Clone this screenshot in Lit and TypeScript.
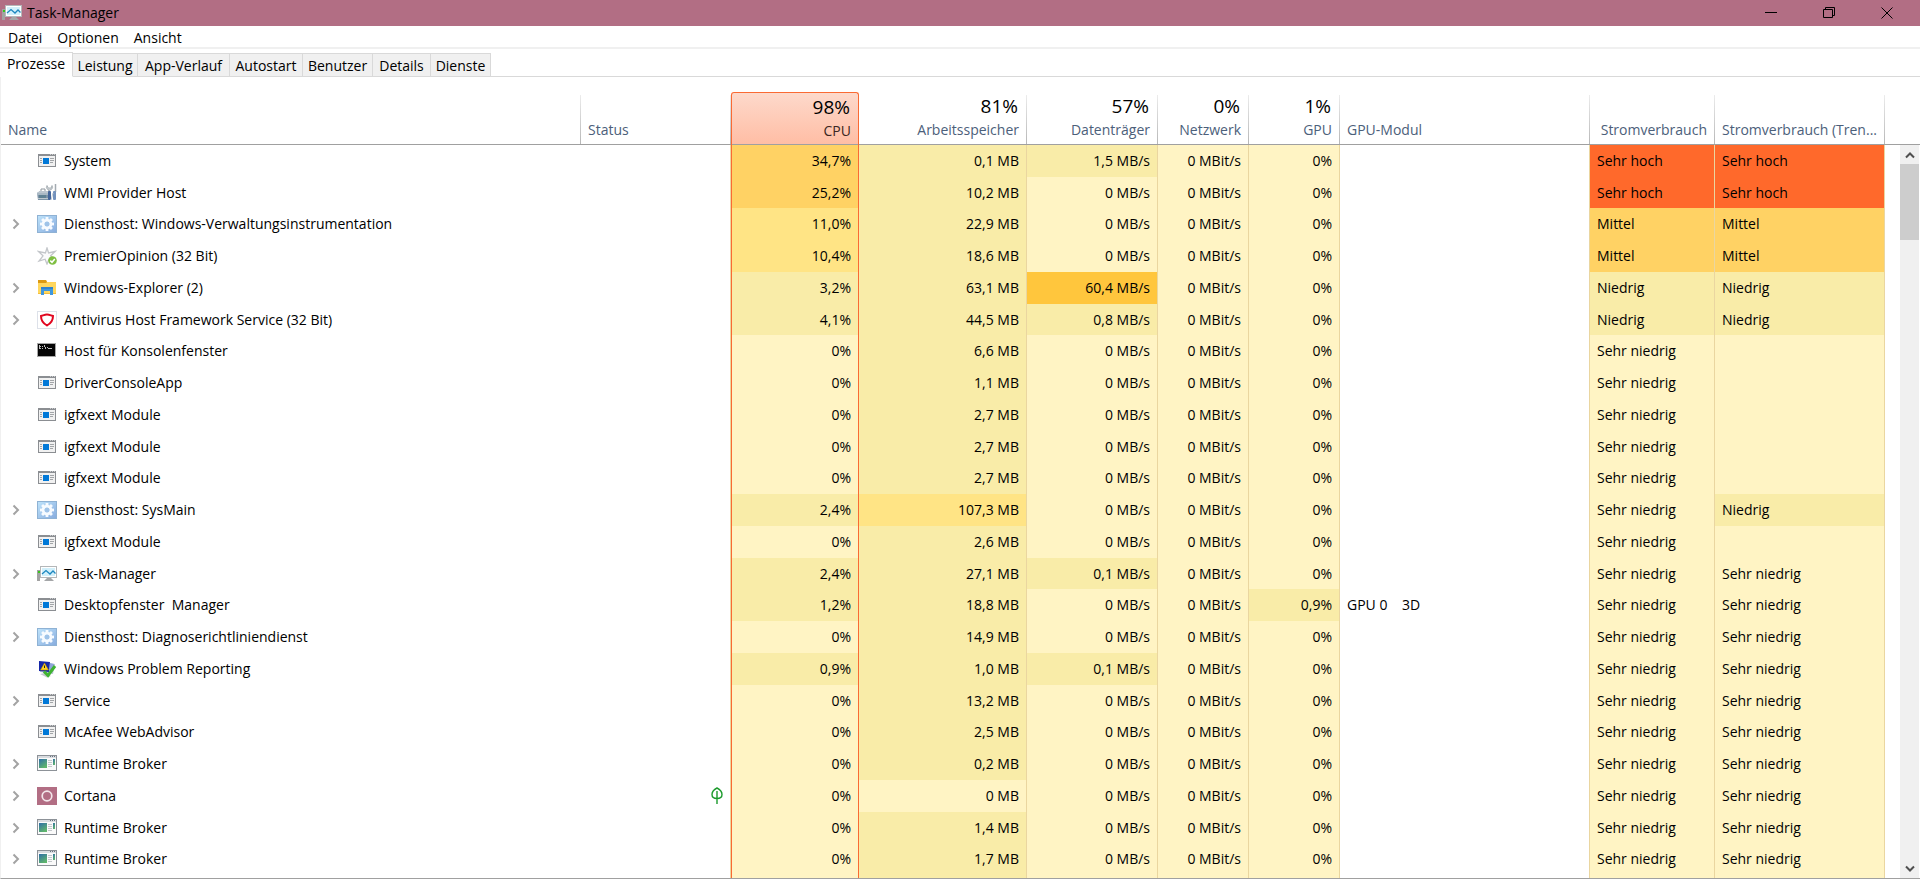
import { LitElement, html, css, svg, nothing } from "lit";
import { customElement, property, state } from "lit/decorators.js";
import { classMap } from "lit/directives/class-map.js";

type Heat = 0 | 1 | 2 | 3 | 4 | 5;
type IconName =
  | "app" | "wmi" | "gear" | "star" | "folder" | "shield" | "console"
  | "monitor" | "problem" | "runtime" | "cortana";

interface Process {
  icon: IconName;
  name: string;
  group?: boolean;
  suspended?: boolean;
  cpu: [string, Heat];
  mem: [string, Heat];
  disk: [string, Heat];
  gpu: [string, Heat];
  engine?: string;
  power: string;
  trend: string;
}

const make = (
  icon: IconName,
  name: string,
  group: boolean,
  cpu: [string, Heat],
  mem: [string, Heat],
  disk: [string, Heat],
  power: string,
  trend: string,
  extra: Partial<Process> = {},
): Process => ({ icon, name, group, cpu, mem, disk, gpu: ["0%", 0], power, trend, ...extra });

const VERY_LOW = "Sehr niedrig";
const IDLE: [string, Heat] = ["0%", 0];
const NO_IO: [string, Heat] = ["0 MB/s", 0];

const PROCESSES: Process[] = [
  make("app", "System", false, ["34,7%", 3], ["0,1 MB", 1], ["1,5 MB/s", 1], "Sehr hoch", "Sehr hoch"),
  make("wmi", "WMI Provider Host", false, ["25,2%", 3], ["10,2 MB", 1], NO_IO, "Sehr hoch", "Sehr hoch"),
  make("gear", "Diensthost: Windows-Verwaltungsinstrumentation", true, ["11,0%", 2], ["22,9 MB", 1], NO_IO, "Mittel", "Mittel"),
  make("star", "PremierOpinion (32 Bit)", false, ["10,4%", 2], ["18,6 MB", 1], NO_IO, "Mittel", "Mittel"),
  make("folder", "Windows-Explorer (2)", true, ["3,2%", 1], ["63,1 MB", 1], ["60,4 MB/s", 4], "Niedrig", "Niedrig"),
  make("shield", "Antivirus Host Framework Service (32 Bit)", true, ["4,1%", 1], ["44,5 MB", 1], ["0,8 MB/s", 1], "Niedrig", "Niedrig"),
  make("console", "Host für Konsolenfenster", false, IDLE, ["6,6 MB", 1], NO_IO, VERY_LOW, ""),
  make("app", "DriverConsoleApp", false, IDLE, ["1,1 MB", 1], NO_IO, VERY_LOW, ""),
  make("app", "igfxext Module", false, IDLE, ["2,7 MB", 1], NO_IO, VERY_LOW, ""),
  make("app", "igfxext Module", false, IDLE, ["2,7 MB", 1], NO_IO, VERY_LOW, ""),
  make("app", "igfxext Module", false, IDLE, ["2,7 MB", 1], NO_IO, VERY_LOW, ""),
  make("gear", "Diensthost: SysMain", true, ["2,4%", 1], ["107,3 MB", 2], NO_IO, VERY_LOW, "Niedrig"),
  make("app", "igfxext Module", false, IDLE, ["2,6 MB", 1], NO_IO, VERY_LOW, ""),
  make("monitor", "Task-Manager", true, ["2,4%", 1], ["27,1 MB", 1], ["0,1 MB/s", 1], VERY_LOW, VERY_LOW),
  make("app", "Desktopfenster  Manager", false, ["1,2%", 1], ["18,8 MB", 1], NO_IO, VERY_LOW, VERY_LOW, { gpu: ["0,9%", 1], engine: "GPU 0    3D" }),
  make("gear", "Diensthost: Diagnoserichtliniendienst", true, IDLE, ["14,9 MB", 1], NO_IO, VERY_LOW, VERY_LOW),
  make("problem", "Windows Problem Reporting", false, ["0,9%", 1], ["1,0 MB", 1], ["0,1 MB/s", 1], VERY_LOW, VERY_LOW),
  make("app", "Service", true, IDLE, ["13,2 MB", 1], NO_IO, VERY_LOW, VERY_LOW),
  make("app", "McAfee WebAdvisor", false, IDLE, ["2,5 MB", 1], NO_IO, VERY_LOW, VERY_LOW),
  make("runtime", "Runtime Broker", true, IDLE, ["0,2 MB", 1], NO_IO, VERY_LOW, VERY_LOW),
  make("cortana", "Cortana", true, IDLE, ["0 MB", 0], NO_IO, VERY_LOW, VERY_LOW, { suspended: true }),
  make("runtime", "Runtime Broker", true, IDLE, ["1,4 MB", 1], NO_IO, VERY_LOW, VERY_LOW),
  make("runtime", "Runtime Broker", true, IDLE, ["1,7 MB", 1], NO_IO, VERY_LOW, VERY_LOW),
];

const powerHeat = (label: string): Heat =>
  label === "Sehr hoch" ? 5 : label === "Mittel" ? 3 : label === "Niedrig" ? 1 : 0;

const TABS = ["Prozesse", "Leistung", "App-Verlauf", "Autostart", "Benutzer", "Details", "Dienste"];
const MENU = ["Datei", "Optionen", "Ansicht"];

const GEAR_TEETH = [0, 45, 90, 135, 180, 225, 270, 315];

const ICONS = {
  app: svg`
    <g shape-rendering="crispEdges">
      <rect x="1" y="2" width="18" height="13" fill="#8b8e92"/>
      <rect x="2" y="4" width="16" height="10" fill="#f1f1f1"/>
      <path d="M13 2.500h1M15 2.500h1M17 2.500h1" stroke="#c9cbcd"/>
      <rect x="6" y="6" width="6" height="6" fill="#0078d7"/>
      <path d="M3 6.500h2M3 8.500h2M3 10.500h2M13 6.500h4M13 8.500h4M13 10.500h3" stroke="#a2a5a8"/>
    </g>`,
  wmi: svg`
    <path d="M0 9l3-2h8l1 2v7H1z" fill="#7d93a6"/>
    <path d="M3 7h8l1 2H0z" fill="#bcc6cf"/>
    <path d="M0 9h12v2H0z" fill="#a9b8c4"/>
    <path d="M4 7V5h4v2" fill="none" stroke="#8f979e"/>
    <rect x="2" y="11" width="7" height="3" fill="#5f8193"/>
    <path d="M1 14.500h10" stroke="#bdc7cd"/>
    <path d="M12 10V5" stroke="#b4bac0" stroke-width="2"/>
    <path d="M10 1.500a3 3 0 1 0 5 0l-.8 2.500h-3z" fill="#d5d9dc" stroke="#9aa3aa" stroke-width=".8"/>
    <path d="M18.500 0v8" stroke="#a3aab0" stroke-width="1.500"/>
    <rect x="11" y="7" width="3" height="9" rx="1" fill="#44659a"/>
    <rect x="16" y="7" width="3" height="9" rx="1" fill="#7392bd"/>
    <path d="M14 16l2-7" stroke="#c0c8d0"/>`,
  gear: svg`
    <defs>
      <linearGradient id="gear-face" x1="0" y1="0" x2="1" y2="1">
        <stop offset="0" stop-color="#bfe4fb"/><stop offset="1" stop-color="#86abde"/>
      </linearGradient>
    </defs>
    <rect x=".5" y=".5" width="19" height="17" fill="url(#gear-face)" stroke="#8fb2d4"/>
    <g fill="#f7fbff">
      ${GEAR_TEETH.map((a) => svg`<rect x="8.600" y="2" width="2.800" height="4" transform="rotate(${a} 10 9)"/>`)}
    </g>
    <circle cx="10" cy="9" r="3.900" fill="none" stroke="#f7fbff" stroke-width="2.800"/>
    <circle cx="10" cy="9" r="2.300" fill="#9fc3e8"/>`,
  star: svg`
    <path d="M10 1l1.600 5 6.400-1.500-4.300 4.300L18 13l-6-.8L10 17l-1.900-4.800L2 14l4-5.200L1.500 4.500l6.900 1.500z" fill="#fbfbfc" stroke="#c3c6ca" stroke-width="1.300"/>
    <circle cx="15.500" cy="13.500" r="4.300" fill="#7fbf42"/>
    <path d="M13.300 13.600l1.700 1.700 2.800-3.300" fill="none" stroke="#fff" stroke-width="1.500"/>`,
  folder: svg`
    <path d="M1 1h8l1 2h9v12H1z" fill="#ffd257"/>
    <path d="M1 1h8l1 2-1 1H1z" fill="#dc9a12"/>
    <path d="M1 4h18v11H1z" fill="#ffd75e"/>
    <path d="M1 14h18v1H1z" fill="#f3bd3c"/>
    <path d="M4 16V8h12v8h-3v-4H7v4z" fill="#3f97de"/>
    <path d="M4 8h12v2H4z" fill="#2f83cd"/>`,
  shield: svg`
    <rect x=".5" y=".5" width="19" height="17" fill="#fff" stroke="#dde1e9"/>
    <path d="M4 5c2-.4 3.500-1.400 6-1.400s4 1 6 1.400c0 4-1.500 7-6 9.500C5.500 12 4 9 4 5z" fill="none" stroke="#e1061f" stroke-width="2"/>`,
  console: svg`
    <g shape-rendering="crispEdges">
      <rect x="0" y="1" width="19" height="14" fill="#a6a6a6"/>
      <rect x="1" y="2" width="17" height="12" fill="#050505"/>
      <path d="M2 4.500h2M2 6.500h2M2.500 3v4M5.500 4v1M5.500 6v1M7.500 3v2M8.500 5v2M10 5.500h1M11 6.500h4" stroke="#bdbdbd" fill="none"/>
    </g>`,
  monitor: svg`
    <rect x="0" y="5" width="3" height="11" fill="#a2a2a2"/>
    <rect x="1" y="6" width="2" height="2" fill="#37c41c"/>
    <path d="M7 16l3-3h4l3 3z" fill="#a4a6a8"/>
    <rect x="3" y="1" width="17" height="12" fill="#b4b7b9"/>
    <rect x="4" y="2" width="15" height="10" fill="#fff"/>
    <rect x="5" y="3" width="13" height="8" fill="#d2f0fb"/>
    <path d="M5 9l4-3.500 4 3.500 3-3 2.500 2.500" fill="none" stroke="#1d87bf" stroke-width="1.300"/>`,
  problem: svg`
    <path d="M3 2l15 2-2 10-13-2z" fill="#b9c3d6"/>
    <path d="M2 1l11 1-1 10-10-1z" fill="#1527a8"/>
    <path d="M13 3l4 1-1 7-4 1z" fill="#8ea4d8"/>
    <path d="M7.500 3l4 7h-8z" fill="#ffd21f" stroke="#b98a00" stroke-width=".5"/>
    <path d="M7.500 5.500v2.500" stroke="#222"/>
    <path d="M3 14l5-1 6 3-4 1.500z" fill="#c4c9cf"/>
    <path d="M7 11.500l4 4L18 6" fill="none" stroke="#3fb331" stroke-width="3"/>`,
  runtime: svg`
    <defs>
      <linearGradient id="pane" x1="0" y1="0" x2=".6" y2="1">
        <stop offset="0" stop-color="#2f6ea8"/><stop offset="1" stop-color="#5fb56c"/>
      </linearGradient>
    </defs>
    <g shape-rendering="crispEdges">
      <rect x="0" y="0" width="20" height="16" fill="#8d9298"/>
      <rect x="1" y="1" width="18" height="14" fill="#fafafa"/>
      <rect x="1" y="1" width="18" height="2" fill="#d9dce0"/>
      <path d="M13 1.500h1M15 1.500h1M17 1.500h1" stroke="#6a7480"/>
      <rect x="2" y="4" width="8" height="9" fill="url(#pane)"/>
      <rect x="16" y="4" width="2" height="6" fill="url(#pane)"/>
      <path d="M11 5.500h4M11 7.500h4M11 9.500h4M11 11.500h4" stroke="#c4c8cc"/>
    </g>`,
  cortana: svg`
    <rect width="20" height="18" fill="#b26e84"/>
    <circle cx="10" cy="9" r="4.800" fill="none" stroke="#f3e6ea" stroke-width="1.700"/>`,
};

@customElement("tm-icon")
class TmIcon extends LitElement {
  @property() name: IconName = "app";

  static styles = css`
    :host { display: block; width: 20px; height: 18px; }
    .glyph { display: block; width: 100%; height: 100%; }
  `;

  render() {
    return html`<svg class="glyph" viewBox="0 0 20 18" aria-hidden="true">${ICONS[this.name]}</svg>`;
  }
}

@customElement("app-root")
class AppRoot extends LitElement {
  @state() private activeTab = "Prozesse";

  static styles = css`
    :host {
      display: flex;
      flex-direction: column;
      height: 100vh;
      overflow: hidden;
      background: #fff;
      color: #000;
      font-family: "Open Sans", "Noto Sans", sans-serif;
      font-size: 14px;
      line-height: 20px;
    }
    button {
      margin: 0;
      padding: 0;
      border: 0;
      background: none;
      color: inherit;
      font: inherit;
      text-align: inherit;
    }

    .titlebar {
      display: flex;
      align-items: center;
      gap: 5px;
      height: 26px;
      flex: none;
      padding: 0 4px 0 2px;
      background: #b26e84;
    }
    .title { flex: 1; font: inherit; margin: 0; }
    .window-buttons { display: flex; }
    .window-button {
      display: grid;
      place-items: center;
      width: 58px;
      height: 26px;
    }
    .window-glyph { display: block; width: 12px; height: 12px; }

    .menu {
      display: flex;
      gap: 15px;
      flex: none;
      height: 21px;
      padding-left: 8px;
      border-bottom: 2px solid #f0f0f0;
    }
    .menu-item { height: 23px; }

    .tabs {
      display: grid;
      grid-template-columns: 73px 65px 92px 73px 70px 58px 60px 1fr;
      align-items: end;
      flex: none;
      height: 28px;
    }
    .tab {
      height: 24px;
      padding-top: 1px;
      box-sizing: border-box;
      border: solid #d9d9d9;
      border-width: 1px 1px 1px 0;
      background: #f0f0f0;
      text-align: center;
      white-space: nowrap;
      overflow: hidden;
    }
    .tab.active {
      height: 25px;
      padding-top: 0;
      padding-bottom: 1px;
      border-bottom-color: #fff;
      background: #fff;
    }
    .tab-rule { height: 0; border-bottom: 1px solid #d9d9d9; }

    .pane {
      display: grid;
      grid-template-columns: minmax(0, 1fr) 20px;
      grid-template-rows: 53px minmax(0, 1fr);
      flex: 1;
      min-height: 0;
      margin-bottom: 11px;
      padding-top: 15px;
      border-left: 1px solid #f0f0f0;
      border-bottom: 1px solid #a0a0a0;
      overflow: hidden;
    }
    .processes {
      grid-area: 1 / 1 / -1 / -1;
      align-self: start;
      width: 100%;
      table-layout: fixed;
      border-spacing: 0;
    }
    .col-status { width: 150px; }
    .col-cpu { width: 128px; }
    .col-mem { width: 168px; }
    .col-disk { width: 131px; }
    .col-net { width: 91px; }
    .col-engine { width: 250px; }
    .col-power { width: 125px; }
    .col-trend { width: 170px; }
    .col-rest { width: 35px; }

    .head {
      height: 53px;
      padding: 0 7px;
      box-sizing: border-box;
      border-bottom: 1px solid #a0a0a0;
      background: linear-gradient(#ececec, #b4b4b4) right 3px / 1px 100% no-repeat;
      background-position: right 0 top 3px;
      color: #4c607a;
      font-weight: 400;
      text-align: left;
      vertical-align: bottom;
      white-space: nowrap;
    }
    .head.rest { background: none; }
    .head.number, .cell.number { text-align: right; }
    .head.number { padding-right: 8px; }
    .head.tight { padding-left: 0; }
    .head.sorted {
      padding: 0 7px;
      border: solid #fa6a33;
      border-width: 1px 1px 0 1px;
      border-radius: 3px 3px 0 0;
      background: linear-gradient(#fdd9cb, #ffbda4);
      box-shadow: inset 0 -1px #a0a0a0;
      color: #3b2622;
    }
    .sort {
      display: block;
      width: 100%;
      height: 49px;
      padding-bottom: 4px;
      box-sizing: border-box;
    }
    .total {
      display: block;
      height: 25px;
      padding-right: 1px;
      color: #000;
      font-size: 19px;
      line-height: 22px;
    }
    .label { display: block; line-height: 20px; }

    .row { height: 32px; }
    .row:nth-child(4n + 2) { height: 31px; }
    .row:last-child { height: 35px; }
    .cell {
      padding: 0 7px;
      box-sizing: border-box;
      font-weight: 400;
      text-align: left;
      line-height: 20px;
      white-space: pre;
    }
    .row:last-child .cell { padding-bottom: 3px; }
    .cell.ruled { border-right: 1px solid #ead6a0; }
    .cell.cpu { border: solid #fa6a33; border-width: 0 1px; }
    .cell.number { padding-right: 7px; }
    .heat0 { background: #fff4c4; }
    .heat1 { background: #f9eca8; }
    .heat2 { background: #ffe485; }
    .heat3 { background: #ffd264; }
    .heat4 { background: #ffc63d; }
    .heat5 { background: #ff692b; }

    .name {
      display: grid;
      grid-template-columns: 22px 20px minmax(0, 1fr);
      align-items: center;
      column-gap: 7px;
    }
    .expand { display: block; width: 20px; height: 20px; }
    .chevron { display: block; width: 8px; height: 12px; margin-left: 4px; }
    .leaf { display: block; width: 12px; height: 18px; margin-left: auto; }

    .scrollbar {
      grid-area: 2 / 2;
      display: flex;
      flex-direction: column;
      margin-right: 1px;
      background: #f0f0f0;
    }
    .scroll-button {
      display: grid;
      place-items: center;
      flex: none;
      width: 19px;
      height: 19px;
    }
    .scroll-glyph { display: block; width: 10px; height: 8px; }
    .thumb { flex: none; height: 76px; background: #cdcdcd; }
    .track { flex: 1; }
  `;

  private head(label: string, total = "", options: { number?: boolean; sorted?: boolean; tight?: boolean } = {}) {
    const classes = { head: true, number: !!options.number, sorted: !!options.sorted, tight: !!options.tight };
    return html`
      <th class=${classMap(classes)} scope="col" aria-sort=${options.sorted ? "descending" : "none"}>
        <button class="sort"><span class="total">${total}</span><span class="label">${label}</span></button>
      </th>`;
  }

  private expander(p: Process) {
    return p.group
      ? html`<button class="expand" aria-label="Erweitern"><svg class="chevron" viewBox="0 0 8 12"><path d="M1.500 1.500L6 6l-4.500 4.500" fill="none" stroke="#a3a3a3" stroke-width="2"/></svg></button>`
      : html`<span></span>`;
  }

  private leaf(p: Process) {
    return p.suspended
      ? html`<svg class="leaf" viewBox="0 0 12 18" role="img" aria-label="Angehalten"><path d="M6 1C3 2.500 1 4.500 1 7.500c0 2.500 2 4 5 4s5-1.500 5-4C11 4.500 9 2.500 6 1zM6 4v13" fill="none" stroke="#1c9a2c" stroke-width="1.400"/></svg>`
      : nothing;
  }

  private row(p: Process) {
    return html`
      <tr class="row">
        <th class="cell" scope="row"><div class="name">${this.expander(p)}<tm-icon name=${p.icon}></tm-icon><span>${p.name}</span></div></th>
        <td class="cell ruled">${this.leaf(p)}</td>
        <td class="cell number cpu heat${p.cpu[1]}">${p.cpu[0]}</td>
        <td class="cell number ruled heat${p.mem[1]}">${p.mem[0]}</td>
        <td class="cell number ruled heat${p.disk[1]}">${p.disk[0]}</td>
        <td class="cell number ruled heat0">0 MBit/s</td>
        <td class="cell number ruled heat${p.gpu[1]}">${p.gpu[0]}</td>
        <td class="cell ruled">${p.engine ?? ""}</td>
        <td class="cell ruled heat${powerHeat(p.power)}">${p.power}</td>
        <td class="cell ruled heat${powerHeat(p.trend)}">${p.trend}</td>
        <td></td>
      </tr>`;
  }

  render() {
    return html`
      <header class="titlebar">
        <tm-icon name="monitor"></tm-icon>
        <h1 class="title">Task-Manager</h1>
        <div class="window-buttons">
          <button class="window-button" aria-label="Minimieren">
            <svg class="window-glyph" viewBox="0 0 12 12"><path d="M0 5.500h12" stroke="#000"/></svg>
          </button>
          <button class="window-button" aria-label="Verkleinern">
            <svg class="window-glyph" viewBox="0 0 12 12"><path d="M.5 2.500h9v8h-9zM2.500 2.500v-2h9v8h-2" fill="none" stroke="#000"/></svg>
          </button>
          <button class="window-button" aria-label="Schließen">
            <svg class="window-glyph" viewBox="0 0 12 12"><path d="M.5 .5l11 11M11.500 .5l-11 11" stroke="#000"/></svg>
          </button>
        </div>
      </header>

      <nav class="menu" aria-label="Menü">
        ${MENU.map((item) => html`<button class="menu-item">${item}</button>`)}
      </nav>

      <div class="tabs" role="tablist">
        ${TABS.map((tab) => html`
          <button
            class=${classMap({ tab: true, active: tab === this.activeTab })}
            role="tab"
            aria-selected=${tab === this.activeTab}
            @click=${() => (this.activeTab = tab)}
          >${tab}</button>`)}
        <span class="tab-rule"></span>
      </div>

      <main class="pane">
        <table class="processes">
          <colgroup>
            <col><col class="col-status"><col class="col-cpu"><col class="col-mem"><col class="col-disk">
            <col class="col-net"><col class="col-net"><col class="col-engine"><col class="col-power">
            <col class="col-trend"><col class="col-rest">
          </colgroup>
          <thead>
            <tr>
              ${this.head("Name")}
              ${this.head("Status")}
              ${this.head("CPU", "98%", { number: true, sorted: true })}
              ${this.head("Arbeitsspeicher", "81%", { number: true })}
              ${this.head("Datenträger", "57%", { number: true })}
              ${this.head("Netzwerk", "0%", { number: true })}
              ${this.head("GPU", "1%", { number: true })}
              ${this.head("GPU-Modul")}
              ${this.head("Stromverbrauch", "", { number: true, tight: true })}
              ${this.head("Stromverbrauch (Tren...", "", { number: true, tight: true })}
              <td class="head rest"></td>
            </tr>
          </thead>
          <tbody>${PROCESSES.map((p) => this.row(p))}</tbody>
        </table>
        <div class="scrollbar">
          <button class="scroll-button" aria-label="Nach oben">
            <svg class="scroll-glyph" viewBox="0 0 10 8"><path d="M1 6.500l4-4 4 4" fill="none" stroke="#505050" stroke-width="2"/></svg>
          </button>
          <div class="thumb"></div>
          <div class="track"></div>
          <button class="scroll-button" aria-label="Nach unten">
            <svg class="scroll-glyph" viewBox="0 0 10 8"><path d="M1 1.500l4 4 4-4" fill="none" stroke="#505050" stroke-width="2"/></svg>
          </button>
        </div>
      </main>
    `;
  }
}
